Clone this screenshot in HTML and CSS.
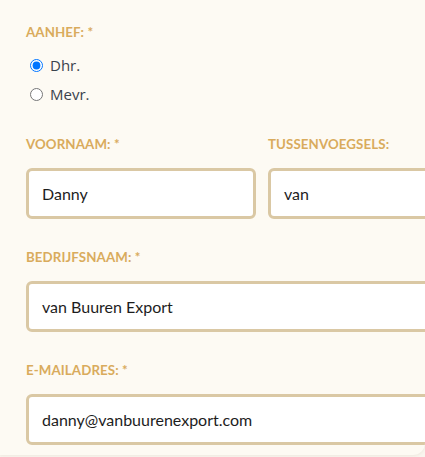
FILE: index.html
```html
<!DOCTYPE html>
<html lang="nl">
<head>
<meta charset="utf-8">
<title>Formulier</title>
<link rel="stylesheet" href="styles.css">
</head>
<body>
<form class="card">
  <div class="field">
    <div class="label">Aanhef: *</div>
    <div class="radios">
      <label class="radio"><input type="radio" name="aanhef" checked> <span>Dhr.</span></label>
      <label class="radio"><input type="radio" name="aanhef"> <span>Mevr.</span></label>
    </div>
  </div>
  <div class="row">
    <div class="field first">
      <div class="label">Voornaam: *</div>
      <div class="input">Danny</div>
    </div>
    <div class="field second">
      <div class="label">Tussenvoegsels:</div>
      <div class="input">van</div>
    </div>
  </div>
  <div class="field">
    <div class="label">Bedrijfsnaam: *</div>
    <div class="input">van Buuren Export</div>
  </div>
  <div class="field">
    <div class="label">E-mailadres: *</div>
    <div class="input">danny@vanbuurenexport.com</div>
  </div>
</form>
</body>
</html>
```
FILE: styles.css
```css
html, body {
  margin: 0;
  padding: 0;
  background: #f9f5ee;
  overflow: hidden;
}
body {
  width: 425px;
  height: 457px;
  font-family: Lato, "Open Sans", sans-serif;
}
.card {
  box-sizing: border-box;
  width: 425px;
  height: 455px;
  background: #fdfaf3;
  border-bottom-right-radius: 12px;
  box-shadow: 0 1px 3px rgba(150, 130, 90, 0.10);
  padding: 24px 0 0 26px;
  display: flex;
  flex-direction: column;
  gap: 30px;
  overflow: hidden;
}
.label {
  font-size: 13.3px;
  line-height: 16px;
  font-weight: 700;
  text-transform: uppercase;
  color: #d9ab5c;
  letter-spacing: 0.1px;
}
.radios {
  margin-top: 15px;
  display: flex;
  flex-direction: column;
  gap: 9px;
  margin-bottom: 2px;
}
.radio {
  display: flex;
  align-items: center;
  height: 20px;
  font-family: "Open Sans", sans-serif;
  font-size: 15px;
  color: #3a424c;
}
.radio input {
  width: 13px;
  height: 13px;
  margin: 0 7px 0 4px;
}
.row {
  display: flex;
  gap: 12px;
}
.field.first {
  width: 230px;
  flex: none;
}
.field.second {
  width: 200px;
  flex: none;
}
.input {
  box-sizing: border-box;
  margin-top: 16px;
  height: 51px;
  width: 430px;
  background: #ffffff;
  border: 3px solid #dac8a4;
  border-radius: 6px;
  padding: 0 0 0 13px;
  display: flex;
  align-items: center;
  font-size: 16px;
  color: #1d1d1d;
}
.field.first .input,
.field.second .input {
  width: 100%;
}
```
